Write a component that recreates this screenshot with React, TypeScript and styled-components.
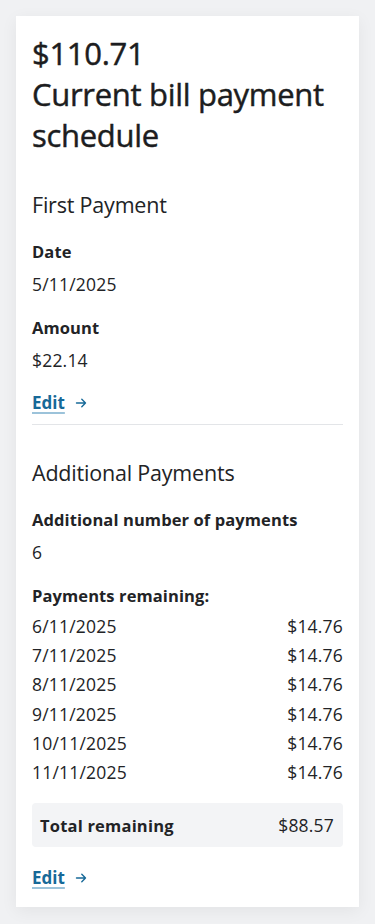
import React from "react";
import styled, { createGlobalStyle } from "styled-components";

const Global = createGlobalStyle`
  html, body { margin: 0; padding: 0; background: #f0f1f3; }
  body { font-family: "Open Sans", "Noto Sans", sans-serif; color: #222326; -webkit-font-smoothing: antialiased; }
  * { box-sizing: border-box; }
`;

const Page = styled.div`
  padding: 16px;
  min-height: 924px;
`;

const Card = styled.section`
  background: #ffffff;
  padding: 17px 16px 17px;
  box-shadow: 0 4px 16px rgba(0, 0, 0, 0.06);
  display: flex;
  flex-direction: column;
`;

const Title = styled.h1`
  margin: 0;
  font-family: "Open Sans", "Noto Sans", sans-serif;
  font-weight: 500;
  font-size: 31px;
  line-height: 41px;
  letter-spacing: -0.3px;
  color: #1c1d20;
  -webkit-text-stroke: 0.45px #1c1d20;
`;

const Section = styled.div`
  display: flex;
  flex-direction: column;
`;

const SectionTitle = styled.h2<{ $top: number }>`
  margin: ${(p) => p.$top}px 0 0;
  font-family: "Open Sans", "Noto Sans", sans-serif;
  font-weight: 400;
  font-size: 21.5px;
  line-height: 30px;
  letter-spacing: -0.2px;
  color: #222326;
`;

const Field = styled.div`
  margin-top: 20px;
  display: flex;
  flex-direction: column;
  gap: 8px;
`;

const Label = styled.div`
  font-weight: 700;
  font-size: 16.5px;
  line-height: 24px;
  letter-spacing: 0.1px;
`;

const Value = styled.div`
  font-size: 17.5px;
  line-height: 24px;
  letter-spacing: 0.2px;
`;

const EditLink = styled.a<{ $top: number }>`
  margin-top: ${(p) => p.$top}px;
  display: inline-flex;
  align-items: center;
  gap: 10px;
  align-self: flex-start;
  color: #176998;
  font-weight: 700;
  font-size: 17px;
  line-height: 24px;
  cursor: pointer;
  span {
    text-decoration: underline;
    text-decoration-color: #9cc3da;
    text-decoration-thickness: 2px;
    text-underline-offset: 3px;
  }
`;

const Divider = styled.hr`
  margin: 9px 0 0;
  border: 0;
  border-top: 1px solid #e3e5e8;
`;

const Rows = styled.div`
  display: flex;
  flex-direction: column;
  margin-top: 4px;
`;

const Row = styled.div`
  display: flex;
  justify-content: space-between;
  font-size: 17.5px;
  line-height: 29.2px;
  letter-spacing: 0.2px;
`;

const Total = styled.div`
  margin-top: 16px;
  background: #f3f4f6;
  border-radius: 4px;
  height: 44px;
  padding: 0 9px 0 8px;
  display: flex;
  align-items: center;
  justify-content: space-between;
  font-size: 17.5px;
  letter-spacing: 0.2px;
`;

const TotalLabel = styled.span`
  font-weight: 700;
  font-size: 16.5px;
`;

const Arrow = () => (
  <svg width="12" height="12" viewBox="0 0 12 12" fill="none" stroke="currentColor" strokeWidth="1.4" strokeLinecap="round" strokeLinejoin="round">
    <path d="M1.5 6h9M6.8 2.3 10.5 6 6.8 9.7" />
  </svg>
);

const payments = [
  "6/11/2025",
  "7/11/2025",
  "8/11/2025",
  "9/11/2025",
  "10/11/2025",
  "11/11/2025",
];

export default function App() {
  return (
    <>
      <Global />
      <Page>
        <Card>
          <Title>
            $110.71
            <br />
            Current bill payment schedule
          </Title>
          <Section>
            <SectionTitle $top={34}>First Payment</SectionTitle>
            <Field>
              <Label>Date</Label>
              <Value>5/11/2025</Value>
            </Field>
            <Field>
              <Label>Amount</Label>
              <Value>$22.14</Value>
            </Field>
            <EditLink $top={19}>
              <span>Edit</span>
              <Arrow />
            </EditLink>
          </Section>
          <Divider />
          <Section>
            <SectionTitle $top={33}>Additional Payments</SectionTitle>
            <Field>
              <Label>Additional number of payments</Label>
              <Value>6</Value>
            </Field>
            <Field>
              <Label>Payments remaining:</Label>
            </Field>
            <Rows>
              {payments.map((d) => (
                <Row key={d}>
                  <span>{d}</span>
                  <span>$14.76</span>
                </Row>
              ))}
            </Rows>
            <Total>
              <TotalLabel>Total remaining</TotalLabel>
              <span>$88.57</span>
            </Total>
            <EditLink $top={19}>
              <span>Edit</span>
              <Arrow />
            </EditLink>
          </Section>
        </Card>
      </Page>
    </>
  );
}
